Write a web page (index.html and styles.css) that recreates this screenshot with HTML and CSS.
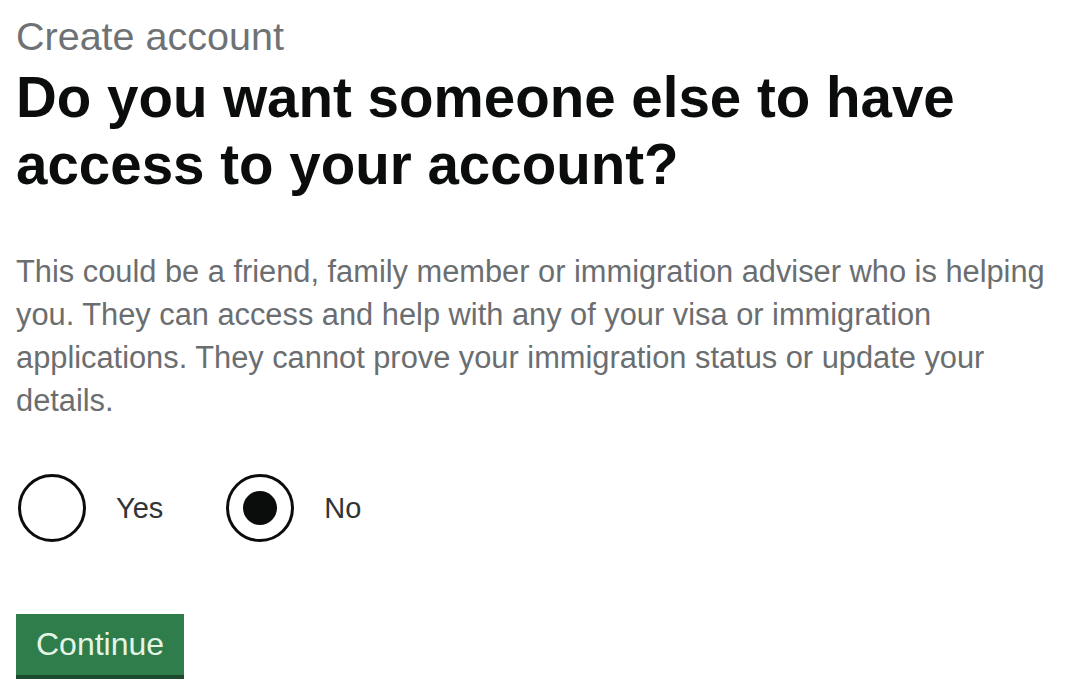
FILE: index.html
```html
<!DOCTYPE html>
<html lang="en">
<head>
  <meta charset="UTF-8" />
  <meta name="viewport" content="width=device-width, initial-scale=1" />
  <title>Create account - Do you want someone else to have access to your account?</title>
  <link rel="stylesheet" href="styles.css">
</head>
<body>
  <main class="page">
    <form class="question">
      <fieldset class="fieldset">
        <legend class="legend">
          <span class="caption">Create account</span>
          <h1 class="heading">Do you want someone else to have access to your account?</h1>
        </legend>

        <p class="hint">This could be a friend, family member or immigration adviser who is helping you. They can access and help with any of your visa or immigration applications. They cannot prove your immigration status or update your details.</p>

        <div class="radios">
          <label class="radio">
            <input class="radio-input" type="radio" name="access" value="yes" />
            <span class="radio-mark"></span>
            <span class="radio-label">Yes</span>
          </label>
          <label class="radio">
            <input class="radio-input" type="radio" name="access" value="no" checked />
            <span class="radio-mark"></span>
            <span class="radio-label">No</span>
          </label>
        </div>
      </fieldset>

      <button class="button" type="submit">Continue</button>
    </form>
  </main>
</body>
</html>
```

FILE: styles.css
```css
* {
  box-sizing: border-box;
}

body {
  margin: 0;
  background: #fff;
  color: #0b0c0c;
  font-family: "Liberation Sans", Arial, sans-serif;
}

.page {
  padding: 10px 16px 0;
  max-width: 1072px;
}

.fieldset {
  margin: 0;
  padding: 0;
  border: none;
}

.legend {
  padding: 0;
}

.caption {
  display: block;
  font-size: 39.5px;
  line-height: 52px;
  color: #6f7275;
}

.heading {
  margin: 2px 0 0;
  font-size: 56.5px;
  line-height: 67px;
  font-weight: 700;
  color: #0b0c0c;
}

.hint {
  margin: 52px 0 0;
  font-size: 30.8px;
  line-height: 43px;
  color: #6b6e70;
}

.radios {
  display: flex;
  gap: 63px;
  margin-top: 52px;
  padding-left: 2px;
}

.radio {
  display: flex;
  align-items: center;
  gap: 30px;
  cursor: pointer;
}

.radio-input {
  display: none;
}

.radio-mark {
  width: 68px;
  height: 68px;
  border: 3px solid #0b0c0c;
  border-radius: 50%;
  display: flex;
  align-items: center;
  justify-content: center;
}

.radio-input:checked + .radio-mark::after {
  content: "";
  width: 34px;
  height: 34px;
  border-radius: 50%;
  background: #0b0c0c;
}

.radio-label {
  font-size: 29px;
  color: #323435;
}

.button {
  margin-top: 72px;
  padding: 10px 20px 11px;
  background: #2f7d4a;
  border: none;
  border-bottom: 4px solid #1d4a2c;
  border-radius: 0;
  color: #e4f5e6;
  font-family: inherit;
  font-size: 32px;
  line-height: 40px;
  cursor: pointer;
}
```
